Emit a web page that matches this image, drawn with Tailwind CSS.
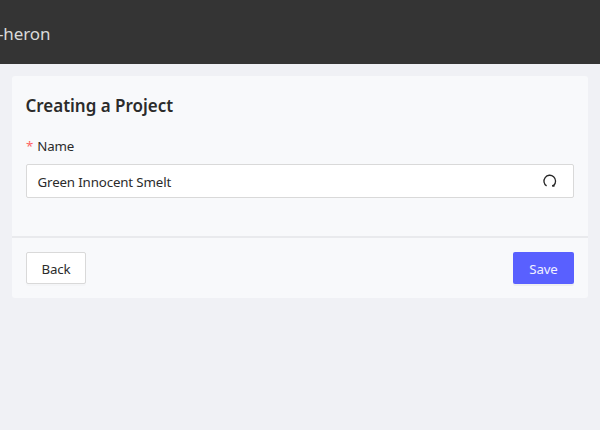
<!DOCTYPE html>
<html lang="en"><head><meta charset="utf-8"><title>Creating a Project</title>
<script src="https://cdn.jsdelivr.net/npm/@tailwindcss/browser@4"></script></head>
<body class="h-[430px] overflow-hidden bg-[#f0f1f5] font-['Noto_Sans',sans-serif] text-[13.3px] tracking-[-0.14px] text-[#2b2b2b]">
<header class="flex h-16 items-center bg-[#343434] text-[17px] text-[#dadada]"><span class="-ml-[2px] pt-1 tracking-[-0.1px]">-heron</span></header>
<main class="mx-3 mt-3 h-[222px] rounded-[3px] bg-[#f8f9fb]">
<div class="h-[160px] px-[14px] pt-[18px]">
<h1 class="-ml-[0.5px] text-[17px] leading-6 font-semibold tracking-[-0.02px]">Creating a Project</h1>
<label class="mt-[17px] flex h-[22px] items-center pt-px"><span class="mr-1 text-[#ff6264]">*</span>Name</label>
<div class="mt-[7px] flex h-[34px] items-center justify-between rounded-xs border border-[#d9d9d9] bg-white pr-[15px] pl-[10.5px]"><span class="pt-[3px]">Green Innocent Smelt</span>
<svg class="size-4" viewBox="0 0 16 16" fill="none" stroke="#262626" stroke-width="1.3"><path d="M4.6 12.9A5.8 5.8 0 1 1 11.8 12.2"/><path d="M10 12.1L12.5 11.4V13.8H10.2Z" fill="#262626" stroke="none"/></svg></div>
</div>
<footer class="flex h-[62px] items-center justify-between border-t-2 border-[#e9eaed] px-[14px]">
<button class="h-8 w-[60px] rounded-xs border border-[#d9d9d9] bg-white pt-[3px] shadow-[0_2px_0_rgba(0,0,0,0.015)]">Back</button>
<button class="h-8 w-[61px] rounded-xs bg-[#5960ff] pt-[3px] text-[#f1f1ff] shadow-[0_2px_0_rgba(0,0,0,0.04)]">Save</button>
</footer></main></body></html>
